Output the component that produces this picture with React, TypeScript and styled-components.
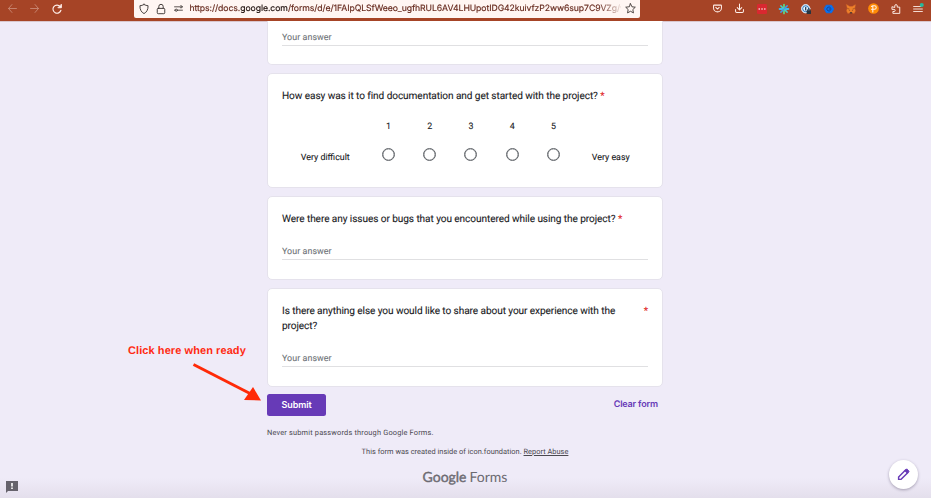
import React from "react";
import styled, { createGlobalStyle } from "styled-components";

const GlobalStyle = createGlobalStyle`
  * { box-sizing: border-box; }
  html, body { margin: 0; padding: 0; overflow: hidden; background: #efebf8; }
`;

const Page = styled.div`
  position: relative;
  width: 931px;
  height: 498px;
  overflow: hidden;
  background: linear-gradient(#efebf8 0, #efebf8 478px, #e4dfec 498px);
  font-family: Roboto, "Liberation Sans", sans-serif;
  text-rendering: geometricPrecision;
  color: #202124;
`;

const Toolbar = styled.header`
  display: flex;
  height: 21px;
  padding: 0 2px 0 1px;
  background: #a64426;
  box-shadow: 0 1px 0 #d9c6cd;
  color: #fff0eb;
`;

const NavButtons = styled.nav`
  display: flex;
  width: 133px;
`;

const Slot = styled.span<{ $w?: number; $dim?: boolean }>`
  display: flex;
  flex: none;
  align-items: center;
  justify-content: center;
  width: ${(p) => p.$w ?? 22.3}px;
  height: 17px;
  opacity: ${(p) => (p.$dim ? 0.42 : 1)};
  svg { display: block; overflow: visible; }
`;

const AddressBar = styled.div`
  display: flex;
  width: 506px;
  height: 18px;
  padding-left: 1px;
  background: #fff6f3;
  border-radius: 0 0 2px 2px;
  color: #3c3533;
`;

const Url = styled.div`
  width: 431px;
  margin-left: 2.5px;
  white-space: nowrap;
  font: 400 8.7px/18px Inter, sans-serif;
  letter-spacing: -0.088px;
  color: #64271b;
  -webkit-text-stroke: 0.15px currentColor;
  mask-image: linear-gradient(to right, #000 408px, transparent 434px);
  b { font-weight: 400; color: #1c0d0a; }
`;

const Extensions = styled.div`
  display: flex;
  margin-left: auto;
`;

const Form = styled.main`
  display: flex;
  flex-direction: column;
  width: 396px;
  margin-left: 267px;
`;

const Card = styled.section<{ $h: number; $pad: number; $first?: boolean }>`
  height: ${(p) => p.$h}px;
  margin-bottom: 8px;
  padding: ${(p) => p.$pad}px 14px 0;
  background: #fff;
  border: 1px solid #e5e2ec;
  border-top-width: ${(p) => (p.$first ? 0 : 1)}px;
  border-radius: ${(p) => (p.$first ? "0 0 5px 5px" : "5px")};
`;

const Question = styled.h2`
  display: flex;
  justify-content: space-between;
  margin: 0;
  font-size: 10.1px;
  font-weight: 400;
  line-height: 15px;
  letter-spacing: -0.083px;
  -webkit-text-stroke: 0.1px currentColor;
`;

const Required = styled.span`
  color: #e0201b;
`;

const Answer = styled.div<{ $gap?: number }>`
  height: 16px;
  margin-top: ${(p) => p.$gap ?? 0}px;
  border-bottom: 1px solid #e0e0e2;
  font-size: 8.9px;
  line-height: 16px;
  letter-spacing: 0.07px;
  color: #70757a;
  -webkit-text-stroke: 0.1px currentColor;
`;

const Scale = styled.div`
  display: grid;
  grid-template-columns: 85px repeat(5, 41.3px) 73px;
  justify-content: center;
  justify-items: center;
  margin-top: 16px;
  font-size: 8.9px;
  line-height: 15px;
  letter-spacing: 0;
  -webkit-text-stroke: 0.1px currentColor;
`;

const ScaleEnd = styled.span`
  grid-row: 2;
  padding-top: 16px;
`;

const ScaleNumber = styled.span`
  grid-row: 1;
`;

const Radio = styled.span`
  grid-row: 2;
  width: 13px;
  height: 13px;
  margin-top: 12.5px;
  border: 1px solid #5f6368;
  box-shadow: inset 0 0 0 0.35px #5f6368;
  border-radius: 50%;
`;

const Actions = styled.div`
  display: flex;
  align-items: center;
  justify-content: space-between;
  padding-right: 5px;
  margin-top: -1px;
  height: 22px;
  font: 600 9px/22px Inter, sans-serif;
  letter-spacing: -0.16px;
  color: #673ab7;
`;

const Submit = styled.button`
  width: 59px;
  height: 22px;
  padding: 0;
  border: 0;
  border-radius: 2.5px;
  background: #673ab7;
  color: #fff;
  font: inherit;
  letter-spacing: -0.1px;
`;

const Notice = styled.p<{ $center?: boolean; $top: number }>`
  margin: ${(p) => p.$top}px 0 0;
  font-size: 7.4px;
  line-height: 11px;
  letter-spacing: ${(p) => (p.$center ? 0.025 : 0.18)}px;
  text-align: ${(p) => (p.$center ? "center" : "left")};
  color: #4b4950;
  u { text-underline-offset: 1px; text-decoration-thickness: 0.6px; }
`;

const Brand = styled.div`
  display: flex;
  justify-content: center;
  gap: 3px;
  margin-top: 11px;
  font: 400 14px/18px Lato, sans-serif;
  color: #6c6a71;
  b { font-weight: 400; -webkit-text-stroke: 0.4px currentColor; }
`;

const Callout = styled.div`
  position: absolute;
  left: 128px;
  top: 344px;
  color: #ff2a12;
  font: 700 11px/14px "Liberation Sans", sans-serif;
  letter-spacing: 0.08px;
  white-space: nowrap;
  svg { display: block; overflow: visible; }
`;

const EditButton = styled.button`
  position: absolute;
  left: 889px;
  top: 460px;
  display: flex;
  align-items: center;
  justify-content: center;
  width: 29px;
  height: 29px;
  padding: 0;
  border: 0;
  border-radius: 50%;
  background: #fff;
  box-shadow: 0 1px 3px rgba(60, 50, 80, 0.4);
`;

const Feedback = styled.div`
  position: absolute;
  left: 5px;
  top: 480px;
  svg { display: block; }
`;

const Glyph = ({ size = 10, children }: { size?: number; children: React.ReactNode }) => (
  <svg width={size} height={size} viewBox="0 0 16 16" fill="none" stroke="currentColor"
    strokeWidth="1.5" strokeLinecap="round" strokeLinejoin="round">{children}</svg>
);

const extensionIcons = [
  <Glyph size={9}><path d="M2 2h12a1 1 0 0 1 1 1v4a7 7 0 0 1-14 0V3a1 1 0 0 1 1-1ZM5 6l3 3 3-3" strokeWidth="1.8" /></Glyph>,
  <Glyph size={9}><path d="M8 0v10M4 6.500 8 10.500l4-4M1 10v3a2 2 0 0 0 2 2h10a2 2 0 0 0 2-2v-3" strokeWidth="1.8" /></Glyph>,
  <Glyph><rect x="0" y="0" width="16" height="16" rx="2" fill="#d92830" stroke="none" /><path d="M3.500 8h.1M8 8h.1M12.500 8h.1" strokeWidth="2.5" /></Glyph>,
  <Glyph>
    <g strokeWidth="3">
      <path d="M8 7V1M8 9v6" stroke="#62d07a" />
      <path d="M7 8H1M9 8h6" stroke="#41b9e8" />
      <path d="m7 7-4-4M9 9l4 4" stroke="#46cdc7" strokeWidth="2.4" />
      <path d="m9 7 4-4M7 9l-4 4" stroke="#4199e8" strokeWidth="2.4" />
    </g>
  </Glyph>,
  <Glyph>
    <circle cx="7.5" cy="7.5" r="6.7" fill="#e9f4ff" stroke="#d5e8f7" />
    <circle cx="7.5" cy="7.5" r="4.8" stroke="#2675bc" strokeWidth="1.6" />
    <path d="M7.500 5.500v4" stroke="#1c3650" strokeWidth="2" />
    <rect x="9" y="10" width="7" height="6" rx="1" fill="#28343f" stroke="none" />
    <path d="M11 10V9a1.500 1.500 0 0 1 3 0v1" stroke="#28343f" />
  </Glyph>,
  <Glyph>
    <path d="M4 2h8l3.500 6L12 14H4L.5 8Z" fill="#0a72f0" stroke="#0a6ce8" />
    <path d="M10.500 6a3.300 3.300 0 1 0 0 4M8.500 8h3" stroke="#183f8f" strokeWidth="1.5" />
  </Glyph>,
  <Glyph>
    <path d="m1 1 5 3h4l5-3-1 6 1 4-2 4-3-1H6l-3 1-2-4 1-4Z" fill="#ee812a" stroke="#e0712a" strokeWidth=".7" />
    <path d="m2.500 7 2.500 1M13.500 7 11 8M5 10l1 .5M11 10l-1 .5" stroke="#8c461f" strokeWidth="1" />
    <path d="M6 13h4l-1 2H7Z" fill="#332f34" stroke="none" />
  </Glyph>,
  <Glyph size={11}>
    <circle cx="8" cy="8" r="7.8" fill="#ff8b05" stroke="none" />
    <path d="M7 13V4h2.500a2.500 2.500 0 0 1 0 5H5M5 5l2-1" strokeWidth="1.5" />
  </Glyph>,
  <Glyph><path d="M6 5V3a2 2 0 0 1 4 0v2h4v10H3v-3h2a1.700 1.700 0 0 0 0-3.400H1.500V5Z" /></Glyph>,
  <Glyph>
    <path d="M1 4h12M1 8h14M1 12h14" strokeWidth="1.4" />
    <circle cx="14" cy="1.5" r="3.2" fill="#28b99b" stroke="none" />
  </Glyph>,
];

export default function App() {
  return (
    <>
      <GlobalStyle />
      <Page>
        <Toolbar>
          <NavButtons>
            <Slot $dim><Glyph size={9}><path d="M15 8H1M7 1 1 8l6 7" /></Glyph></Slot>
            <Slot $dim><Glyph size={9}><path d="M1 8h14M9 1l6 7-6 7" /></Glyph></Slot>
            <Slot><Glyph size={10}><path d="M13 4a6.500 6.500 0 1 0 1.300 6" strokeWidth="1.8" /><path d="M15 1v5h-5Z" fill="currentColor" /></Glyph></Slot>
          </NavButtons>
          <AddressBar>
            <Slot $w={17}><Glyph><path d="M8 .7c2 1.300 4 1.800 6.500 2C14.800 9 12 13.500 8 15.300 4 13.500 1.200 9 1.500 2.700 4 2.500 6 2 8 .7Z" /></Glyph></Slot>
            <Slot $w={18}><Glyph><rect x="2" y="7" width="12" height="8.5" rx="1.5" /><path d="M4.500 7V4a3.500 3.500 0 0 1 7 0v3" /></Glyph></Slot>
            <Slot $w={17}><Glyph size={9}><path d="M1 5h8M7 11h8M1 11h1" /><circle cx="12.5" cy="5" r="2" /><circle cx="4" cy="11" r="2" /></Glyph></Slot>
            <Url>https://docs.<b>google.com</b>/forms/d/e/1FAIpQLSfWeeo_ugfhRUL6AV4LHUpotIDG42kuivfzP2ww6sup7C9VZg/v</Url>
            <Slot $w={19}><Glyph size={11}><path d="m8 1 2.100 4.500 4.900.6-3.600 3.400.9 4.900L8 12l-4.300 2.400.9-4.900L1 6.100l4.900-.6Z" strokeWidth="1.3" /></Glyph></Slot>
          </AddressBar>
          <Extensions>
            {extensionIcons.map((icon, i) => <Slot key={i}>{icon}</Slot>)}
          </Extensions>
        </Toolbar>

        <Form>
          <Card $h={44} $pad={9} $first><Answer>Your answer</Answer></Card>
          <Card $h={115} $pad={15}>
            <Question><span>How easy was it to find documentation and get started with the project? <Required>*</Required></span></Question>
            <Scale>
              <ScaleEnd>Very difficult</ScaleEnd>
              {[1, 2, 3, 4, 5].map((n) => (
                <React.Fragment key={n}>
                  <ScaleNumber style={{ gridColumn: n + 1 }}>{n}</ScaleNumber>
                  <Radio style={{ gridColumn: n + 1 }} />
                </React.Fragment>
              ))}
              <ScaleEnd>Very easy</ScaleEnd>
            </Scale>
          </Card>
          <Card $h={84} $pad={14.5}>
            <Question><span>Were there any issues or bugs that you encountered while using the project? <Required>*</Required></span></Question>
            <Answer $gap={17.5}>Your answer</Answer>
          </Card>
          <Card $h={99} $pad={14.5}>
            <Question>
              <span>Is there anything else you would like to share about your experience with the<br />project?</span>
              <Required>*</Required>
            </Question>
            <Answer $gap={17.5}>Your answer</Answer>
          </Card>
          <Actions><Submit>Submit</Submit><span>Clear form</span></Actions>
          <Notice $top={11}>Never submit passwords through Google Forms.</Notice>
          <Notice $top={8} $center>This form was created inside of icon.foundation. <u>Report Abuse</u></Notice>
          <Brand><b>Google</b><span>Forms</span></Brand>
        </Form>

        <Callout>
          Click here when ready
          <svg width="134" height="44" viewBox="0 0 134 44">
            <path d="M65.500 6.500 122 35.500" stroke="#ff2a08" strokeWidth="3" />
            <path d="m125 29 8 13.500-17-.500Z" fill="#ff2a08" />
          </svg>
        </Callout>
        <EditButton aria-label="Edit">
          <svg width="13" height="13" viewBox="0 0 16 16" fill="none" stroke="#673ab7" strokeWidth="1.8">
            <path d="M2 14v-3L10.500 2.500l3 3L5 14Z" />
            <path d="m9.500 3.500 2.500-2.500 3 3-2.500 2.500Z" fill="#673ab7" strokeWidth="1" />
          </svg>
        </EditButton>
        <Feedback>
          <svg width="14" height="13" viewBox="0 0 14 13">
            <path d="M1 1h12v10H3l-2 2Z" fill="#66636c" />
            <path d="M6.200 3h1.600v3.500H6.200ZM6.200 7.500h1.600V9H6.200Z" fill="#fff" />
          </svg>
        </Feedback>
      </Page>
    </>
  );
}
